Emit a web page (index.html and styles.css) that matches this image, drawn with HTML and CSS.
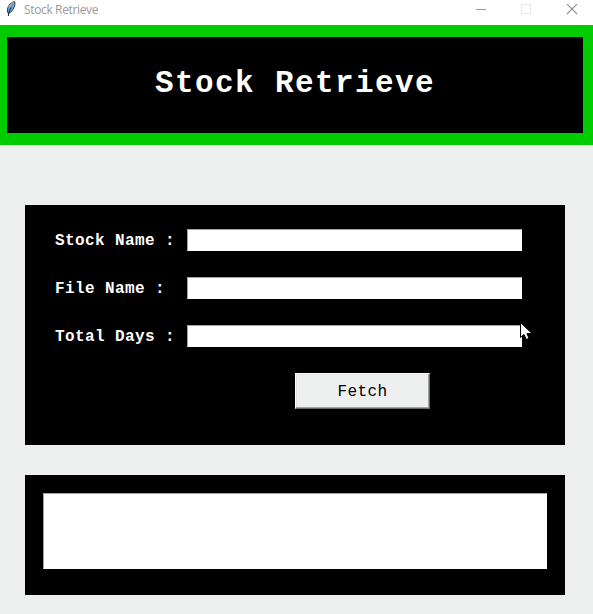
FILE: index.html
```html
<!DOCTYPE html>
<html lang="en">
<head>
<meta charset="utf-8">
<title>Stock Retrieve</title>
<link rel="stylesheet" href="styles.css">
</head>
<body>
<header class="titlebar">
  <svg class="feather" width="10" height="16" viewBox="0 0 10 16" aria-hidden="true">
    <path d="M8.6.5 C5.5 1 2 4.5 1.5 8 L1.5 11 L2.5 12.5 C5.5 11 7 9 8 6.5 C8.8 4.5 9.3 2.5 8.6.5Z" fill="#62a5e3" stroke="#2b3035" stroke-width=".9"/>
    <path d="M8 .9 C6.2 1.4 4 3.3 2.7 6" fill="none" stroke="#c9b27c" stroke-width=".9"/>
    <path d="M5 6.5 C3.8 9 2.8 11 2.3 15" fill="none" stroke="#111d29" stroke-width="1"/>
  </svg>
  <span class="caption">Stock Retrieve</span>
  <svg class="controls" width="103" height="12" viewBox="0 0 103 12" fill="none" aria-hidden="true">
    <path d="M1 5.5H11" stroke="#999"/>
    <rect x="46.5" y=".5" width="9" height="9" stroke="#e8e8e8"/>
    <path d="M92 0L102 10M102 0L92 10" stroke="#929292" stroke-width="1.1"/>
  </svg>
</header>
<main>
  <div class="banner"><h1>Stock Retrieve</h1></div>
  <form class="panel">
    <label class="row"><span>Stock Name :</span><input type="text"></label>
    <label class="row"><span>File Name :</span><input type="text"></label>
    <label class="row"><span>Total Days :</span><input type="text"></label>
    <button type="button">Fetch</button>
  </form>
  <section class="output"><textarea aria-label="Result"></textarea></section>
</main>
<svg class="cursor" width="13" height="19" viewBox="0 0 13 19" aria-hidden="true">
  <path d="M.5.5V15.5L4 12.5L6.3 17.5L9 16.3L7 11.5H12Z" fill="#fff" stroke="#000"/>
</svg>
</body>
</html>
```

FILE: styles.css
```css
* { box-sizing: border-box; }
body {
  margin: 0;
  height: 614px;
  overflow: hidden;
  background: #eef0f0;
  font-family: "Liberation Mono", monospace;
}
.titlebar {
  display: flex;
  height: 25px;
  background: #fff;
  color: #999;
  font: 12px/20px "Open Sans", sans-serif;
}
.feather { margin: 1px 0 0 6px; }
.caption { margin-left: 8px; letter-spacing: -0.36px; }
.controls { margin: 4px 15px 0 auto; }
.banner {
  height: 120px;
  padding: 12px 10px 12px 7px;
  background: #00cc00;
}
h1 {
  height: 96px;
  margin: 0;
  background: #000;
  color: #fff;
  font-size: 31px;
  letter-spacing: 1.4px;
  line-height: 93px;
  text-align: center;
}
.panel {
  display: flex;
  flex-direction: column;
  gap: 26px;
  width: 540px;
  height: 240px;
  margin: 60px 0 0 25px;
  padding: 24px 30px;
  background: #000;
}
.row {
  display: flex;
  height: 22px;
  color: #fff;
  font-size: 16px;
  letter-spacing: 0.4px;
  font-weight: bold;
  line-height: 25px;
}
.row span { width: 132px; white-space: pre; }
input, textarea {
  display: block;
  margin: 0;
  border: 1px solid #fff;
  border-top-color: #a0a0a0;
  border-left-color: #a0a0a0;
  border-radius: 0;
  background: #fff;
  outline: none;
  resize: none;
}
input { width: 335px; height: 22px; }
button {
  width: 135px;
  height: 36px;
  margin-left: 240px;
  padding: 2px 0 0;
  border: 1px solid;
  border-color: #fff #696969 #696969 #fff;
  border-radius: 0;
  box-shadow: inset -1px -1px #a0a0a0, inset 1px 1px #e3e3e3;
  background: #eef0f0;
  color: #000;
  font: 16px/32px "Liberation Mono", monospace;
  letter-spacing: 0.4px;
}
.output {
  width: 540px;
  height: 120px;
  margin: 30px 0 0 25px;
  padding: 18px;
  background: #000;
}
textarea { width: 504px; height: 76px; }
.cursor {
  position: absolute;
  left: 520px;
  top: 322px;
}
```
